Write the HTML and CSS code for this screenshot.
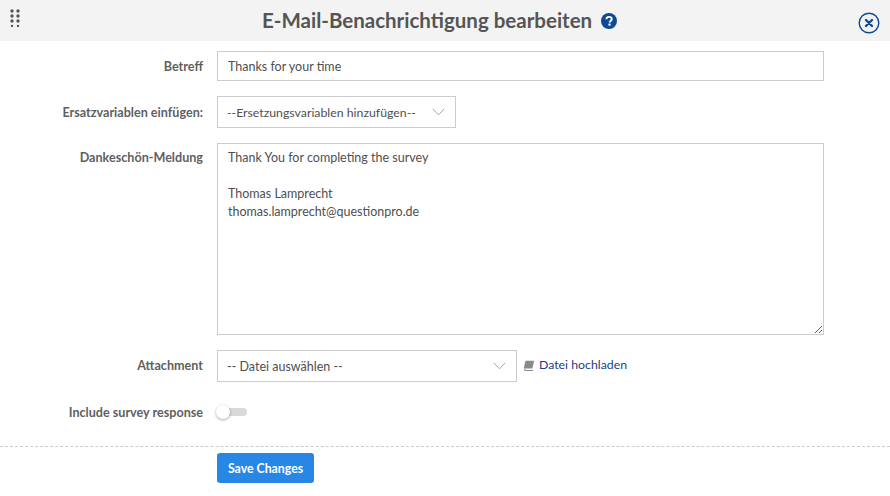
FILE: index.html
```html
<!DOCTYPE html>
<html lang="de">
<head>
<meta charset="utf-8">
<title>E-Mail-Benachrichtigung bearbeiten</title>
<link rel="stylesheet" href="styles.css">
</head>
<body>
<header class="head">
  <svg class="grip" width="10" height="18" viewBox="0 0 10 18"><g fill="#555"><circle cx="2" cy="2" r="1.7"/><circle cx="8" cy="2" r="1.7"/><circle cx="2" cy="7" r="1.7"/><circle cx="8" cy="7" r="1.7"/><circle cx="2" cy="12" r="1.7"/><circle cx="8" cy="12" r="1.7"/><circle cx="2" cy="17" r="1.2"/><circle cx="8" cy="17" r="1.2"/></g></svg>
  <h1 class="title">E-Mail-Benachrichtigung bearbeiten</h1>
  <svg class="help" width="16" height="16" viewBox="0 0 16 16"><circle cx="8" cy="8" r="8" fill="#0d4a94"/><path d="M5.4 6.200C5.500 4.700 6.600 3.900 8.100 3.900c1.500 0 2.600.9 2.600 2.100 0 1.900-2.100 1.900-2.100 3.500" fill="none" stroke="#fff" stroke-width="1.900"/><rect x="7.400" y="10.600" width="2.200" height="2" fill="#fff"/></svg>
  <svg class="close" width="22" height="22" viewBox="0 0 22 22"><circle cx="11" cy="11" r="9.800" fill="none" stroke="#0d4a94" stroke-width="1.400"/><path d="M8 8l6 6M14 8l-6 6" stroke="#0d4a94" stroke-width="2.400" stroke-linecap="round"/></svg>
</header>
<form class="form">
  <label class="lbl">Betreff</label>
  <div class="field"><div class="box subject">Thanks for your time</div></div>
  <label class="lbl">Ersatzvariablen einfügen:</label>
  <div class="field"><div class="box select vars"><span class="vars-text">--Ersetzungsvariablen hinzufügen--</span><svg class="chev" width="13" height="8" viewBox="0 0 13 8"><path d="M.7.8l5.800 6 5.800-6" fill="none" stroke="#9aa7b5" stroke-width="1"/></svg></div></div>
  <label class="lbl lbl-top">Dankeschön-Meldung</label>
  <div class="field"><textarea class="box area">Thank You for completing the survey

Thomas Lamprecht
thomas.lamprecht@questionpro.de</textarea></div>
  <label class="lbl lbl-up">Attachment</label>
  <div class="field attach">
    <div class="box select file"><span>-- Datei auswählen --</span><svg class="chev" width="13" height="8" viewBox="0 0 13 8"><path d="M.7.8l5.800 6 5.800-6" fill="none" stroke="#9aa7b5" stroke-width="1"/></svg></div>
    <svg class="book" width="12" height="12" viewBox="0 0 12 12"><path d="M3 .8h8.200L9.400 8.600H1.600C.9 8.600.8 8 1 7.200L2.300 1.600C2.400 1.100 2.600.8 3 .8z" fill="#8a8a8a"/><path d="M1.300 8.800c-.5 1.300.1 2.200 1 2.200h7.500l.4-1H3c-.7 0-.9-.5-.6-1.200z" fill="#8a8a8a"/></svg>
    <a class="upload">Datei hochladen</a>
  </div>
  <label class="lbl">Include survey response</label>
  <div class="field toggle-field"><span class="toggle"><span class="knob"></span></span></div>
</form>
<footer class="foot"><button class="save" type="button">Save Changes</button></footer>
</body>
</html>
```
FILE: styles.css
```css
html, body { margin: 0; padding: 0; }
body {
  width: 890px; height: 496px; overflow: hidden; background: #fff;
  font-family: "Lato", "Open Sans", sans-serif; font-size: 12.5px; color: #555;
}
.head {
  height: 41px; background: #f3f3f3; display: flex; align-items: center;
  gap: 9px; position: relative; padding-left: 262px; box-sizing: border-box;
}
.title { margin: 0; font-size: 20.5px; font-weight: 700; color: #555; line-height: 41px; white-space: nowrap; }
.help { margin-top: 1px; }
.grip { position: absolute; left: 10px; top: 9px; }
.close { position: absolute; left: 858px; top: 12px; }
.form {
  display: grid; grid-template-columns: 203px 607px; column-gap: 14px;
  padding-top: 10px; row-gap: 15px; align-items: center;
}
.lbl { text-align: right; font-weight: 700; color: #5f5f5f; font-size: 12.6px; }
.lbl-top { align-self: start; padding-top: 7px; }
.lbl-up { padding-bottom: 2px; }
.field { display: flex; align-items: center; }
.toggle-field { height: 30px; }
.box {
  box-sizing: border-box; border: 1px solid #ccc; background: #fff; color: #4f4f4f;
  font-family: inherit; font-size: 12.5px; padding: 0 10px; display: flex; align-items: center;
}
.subject { width: 607px; height: 30px; }
.select { height: 32px; justify-content: space-between; padding: 0 9px; }
.vars-text { font-size: 12.3px; }
.vars { width: 239px; }
.file { width: 300px; }
.chev { margin-right: 1px; flex: none; }
.area {
  display: block; width: 607px; height: 192px; padding: 5px 10px; line-height: 18px; resize: both;
  outline: none; border-radius: 0; margin: 0;
}
.book { margin-left: 6px; margin-right: 4px; }
.upload { color: #1c3f7c; position: relative; top: -2px; font-size: 12.3px; }
.toggle {
  width: 30px; height: 8px; background: #d9d9d9; border-radius: 4px; position: relative; display: block;
}
.knob {
  position: absolute; left: -1px; top: -3px; width: 14px; height: 14px; border-radius: 50%;
  background: #fff; box-shadow: 0 1px 3px rgba(0,0,0,.35);
}
.foot { margin-top: 19px; border-top: 1px dashed #ccc; padding: 6px 0 0 217px; }
.save {
  width: 97px; height: 30px; background: #2886e6; color: #fff; border: 0; border-radius: 3px;
  font-family: inherit; font-size: 12.3px; font-weight: 700; padding: 0;
}
```
